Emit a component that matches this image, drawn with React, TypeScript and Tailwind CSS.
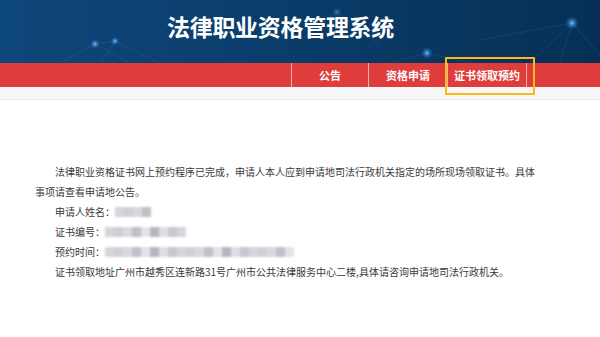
import React from 'react';

const navItems = [
  { label: '公告', width: 'w-[77px]' },
  { label: '资格申请', width: 'w-[79px]' },
  { label: '证书领取预约', width: 'w-[80px]', active: true },
];

// mosaic shades used for the blurred personal data
const shades = ['#cfcfd4', '#dedee1', '#bfc1c9', '#d5d6db', '#b4b7c1', '#d9d9dd', '#c8c9cf', '#e4e4e6'];

const Masked: React.FC<{ blocks: number }> = ({ blocks }) => (
  <span className="inline-flex align-middle -mt-[2px] blur-[1.2px]">
    {Array.from({ length: blocks }).map((_, i) => (
      <span
        key={i}
        className="inline-block w-[9px] h-[10px]"
        style={{ backgroundColor: shades[(i * 5 + 3) % shades.length] }}
      />
    ))}
  </span>
);

const HeaderDecor = () => (
  <svg className="absolute inset-0 w-full h-full" viewBox="0 0 600 63" preserveAspectRatio="none">
    <defs>
      <radialGradient id="glow">
        <stop offset="0%" stopColor="#7cc4ff" stopOpacity="0.95" />
        <stop offset="45%" stopColor="#3d95e0" stopOpacity="0.55" />
        <stop offset="100%" stopColor="#1d5fa0" stopOpacity="0" />
      </radialGradient>
    </defs>
    <g stroke="#4f8fcf" strokeOpacity="0.18" strokeWidth="1" fill="none">
      <path d="M95 44 L60 63 M95 44 L130 63 M115 41 L100 63 M115 41 L160 63 M95 44 L115 41" />
      <path d="M337 12 L300 40 M337 12 L380 45 M427 53 L390 63 M427 53 L470 63" />
      <path d="M572 23 L530 63 M572 23 L600 55 M572 23 L560 63 M572 23 L480 40" />
    </g>
    <circle cx="95" cy="44" r="5" fill="url(#glow)" />
    <circle cx="115" cy="41" r="4.5" fill="url(#glow)" />
    <circle cx="337" cy="12" r="5" fill="url(#glow)" opacity="0.5" />
    <circle cx="427" cy="53" r="6" fill="url(#glow)" />
    <circle cx="572" cy="23" r="7" fill="url(#glow)" />
  </svg>
);

export default function App() {
  return (
    <div className="min-h-screen bg-white font-['Noto_Sans_CJK_SC','Noto_Sans',sans-serif]">
      <header className="relative h-[63px] overflow-hidden bg-gradient-to-r from-[#0e477a] via-[#0a3c69] to-[#072f55]">
        <HeaderDecor />
        <div className="relative mx-auto w-[530px] h-full flex items-center">
          <h1 className="ml-[132px] -mt-[10px] text-[23px] leading-none font-bold text-white tracking-[-0.3px]">
            法律职业资格管理系统
          </h1>
        </div>
      </header>

      <nav className="h-[24px] bg-[#df3c3c]">
        <ul className="mx-auto w-[530px] h-full flex justify-end pr-[38px]">
          {navItems.map((item, i) => (
            <li
              key={item.label}
              className={`relative ${item.width} h-full flex items-center justify-center border-l border-white/60 ${
                i === navItems.length - 1 ? 'border-r' : ''
              }`}
            >
              <span className="text-[11px] font-bold text-white">{item.label}</span>
              {item.active && (
                <span className="absolute -left-[3px] -right-[9px] -top-[6px] -bottom-[8px] border-2 border-[#f9b919] rounded-[1px] pointer-events-none" />
              )}
            </li>
          ))}
        </ul>
      </nav>

      <div className="h-[13px] bg-[#f7f7f7] border-b border-[#ebebeb]" />

      <main className="mx-auto w-[530px] pt-[62px]">
        <div className="w-[505px] text-[10px] leading-[20px] text-[#3a3a3a]">
          <p className="indent-[2em]">
            法律职业资格证书网上预约程序已完成，申请人本人应到申请地司法行政机关指定的场所现场领取证书。具体事项请查看申请地公告。
          </p>
          <p className="indent-[2em]">
            申请人姓名：<Masked blocks={4} />
          </p>
          <p className="indent-[2em]">
            证书编号：<Masked blocks={9} />
          </p>
          <p className="indent-[2em]">
            预约时间：<Masked blocks={21} />
          </p>
          <p className="indent-[2em]">
            证书领取地址广州市越秀区连新路31号广州市公共法律服务中心二楼,具体请咨询申请地司法行政机关。
          </p>
        </div>
      </main>
    </div>
  );
}
